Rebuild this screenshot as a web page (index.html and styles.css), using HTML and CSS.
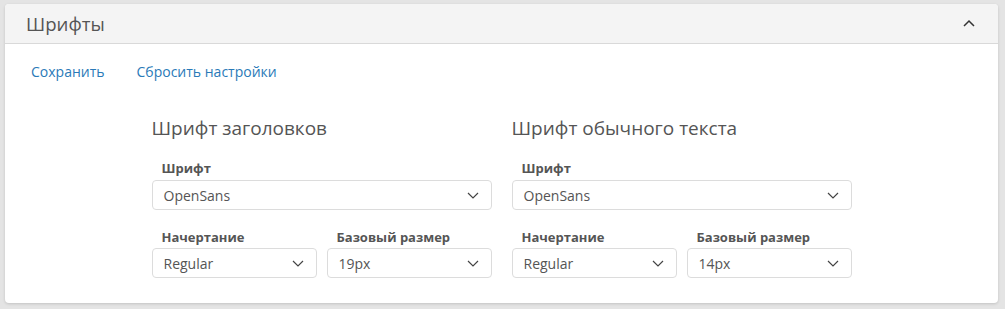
FILE: index.html
```html
<!DOCTYPE html>
<html lang="ru">
<head>
<meta charset="utf-8">
<link rel="stylesheet" href="styles.css">
</head>
<body>
<div class="card">
  <div class="card-header">
    <span class="card-title">Шрифты</span>
    <svg class="chev-up" width="12" height="8" viewBox="0 0 12 8"><path d="M1 7 L6 2 L11 7" fill="none" stroke="#333" stroke-width="1.5"/></svg>
  </div>
  <div class="card-body">
    <div class="actions">
      <a class="link" href="#">Сохранить</a>
      <a class="link" href="#">Сбросить настройки</a>
    </div>
    <div class="columns">
      <div class="col">
        <h3 class="col-title">Шрифт заголовков</h3>
        <div class="field">
          <div class="label">Шрифт</div>
          <div class="select"><span>OpenSans</span><svg width="12" height="7" viewBox="0 0 12 7"><path d="M1 1 L6 6 L11 1" fill="none" stroke="#444" stroke-width="1.2"/></svg></div>
        </div>
        <div class="row">
          <div class="field">
            <div class="label">Начертание</div>
            <div class="select"><span>Regular</span><svg width="12" height="7" viewBox="0 0 12 7"><path d="M1 1 L6 6 L11 1" fill="none" stroke="#444" stroke-width="1.2"/></svg></div>
          </div>
          <div class="field">
            <div class="label">Базовый размер</div>
            <div class="select"><span>19px</span><svg width="12" height="7" viewBox="0 0 12 7"><path d="M1 1 L6 6 L11 1" fill="none" stroke="#444" stroke-width="1.2"/></svg></div>
          </div>
        </div>
      </div>
      <div class="col">
        <h3 class="col-title">Шрифт обычного текста</h3>
        <div class="field">
          <div class="label">Шрифт</div>
          <div class="select"><span>OpenSans</span><svg width="12" height="7" viewBox="0 0 12 7"><path d="M1 1 L6 6 L11 1" fill="none" stroke="#444" stroke-width="1.2"/></svg></div>
        </div>
        <div class="row">
          <div class="field">
            <div class="label">Начертание</div>
            <div class="select"><span>Regular</span><svg width="12" height="7" viewBox="0 0 12 7"><path d="M1 1 L6 6 L11 1" fill="none" stroke="#444" stroke-width="1.2"/></svg></div>
          </div>
          <div class="field">
            <div class="label">Базовый размер</div>
            <div class="select"><span>14px</span><svg width="12" height="7" viewBox="0 0 12 7"><path d="M1 1 L6 6 L11 1" fill="none" stroke="#444" stroke-width="1.2"/></svg></div>
          </div>
        </div>
      </div>
    </div>
  </div>
</div>
</body>
</html>
```
FILE: styles.css
```css
html, body {
  margin: 0;
  padding: 0;
  background: #e4e4e4;
  font-family: "Open Sans", "Liberation Sans", sans-serif;
}
body {
  padding: 4px 7px 6px 5px;
}
.card {
  background: #fff;
  border-radius: 4px;
  box-shadow: 0 1px 3px rgba(0,0,0,0.15);
  overflow: hidden;
  height: 299px;
}
.card-header {
  background: #f4f4f4;
  border-bottom: 1px solid #d9d9d9;
  height: 39px;
  display: flex;
  align-items: center;
  justify-content: space-between;
  padding: 0 23px 0 21px;
}
.card-title {
  font-size: 18.6px;
  color: #555;
}
.chev-up { display: block; margin-top: -2px; }
.card-body {
  padding: 0 26px;
}
.actions {
  display: flex;
  gap: 32px;
  height: 54px;
  padding-bottom: 2px;
  align-items: center;
}
.link {
  color: #2a7ab8;
  font-size: 14px;
  text-decoration: none;
}
.columns {
  width: 700px;
  margin: 0 auto;
  display: flex;
  gap: 20px;
}
.col {
  width: 340px;
}
.col-title {
  margin: 0;
  font-weight: 400;
  font-size: 19px;
  color: #555;
  line-height: 24px;
  padding-top: 16px;
  margin-bottom: 19px;
}
.field { flex: 1; }
.label {
  font-size: 13px;
  font-weight: 700;
  color: #555;
  padding-left: 10px;
  line-height: 18px;
  height: 21px;
  margin-top: 2px;
}
.select {
  height: 30px;
  box-sizing: border-box;
  border: 1px solid #dcdcdc;
  border-radius: 4px;
  display: flex;
  align-items: center;
  justify-content: space-between;
  padding: 0 12px 0 11px;
  font-size: 14px;
  color: #555;
}
.row {
  display: flex;
  gap: 10px;
  margin-top: 16px;
}
.row .label { height: 20px; }
```
